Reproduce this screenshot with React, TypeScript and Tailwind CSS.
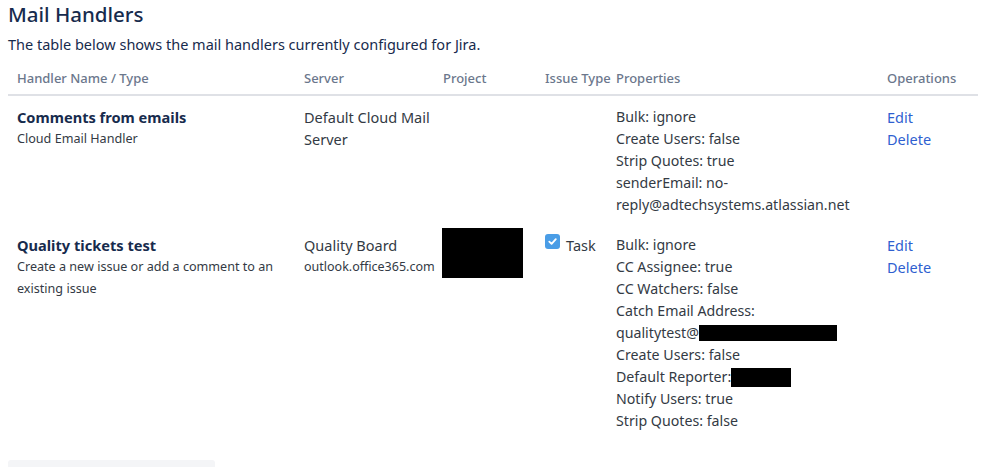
import React from "react";

const font = { fontFamily: '"Noto Sans", "Open Sans", sans-serif' };

function Props({ children }: { children: React.ReactNode }) {
  return <div className="text-[14.2px] leading-[22px] text-[#333a44]">{children}</div>;
}

function Ops() {
  return (
    <div className="flex flex-col text-[14.5px] leading-[22px] text-[#2f5fd0]">
      <a className="cursor-pointer">Edit</a>
      <a className="cursor-pointer">Delete</a>
    </div>
  );
}

const cols = "grid grid-cols-[287px_139px_102px_71px_271px_1fr] pl-[9px]";

export default function App() {
  return (
    <div className="bg-white w-[998px] h-[467px] overflow-hidden px-[8px]" style={font}>
      <h1 className="text-[20.5px] leading-[28px] font-medium text-[#172b4d] m-0">Mail Handlers</h1>
      <p className="mt-[6px] text-[14.5px] leading-[20px] text-[#172b4d]">
        The table below shows the mail handlers currently configured for Jira.
      </p>
      <div className="mt-[14px] w-[970px]">
        <div className={`${cols} pb-[6px] border-b-2 border-[#dfe1e6] text-[13px] leading-[20px] text-[#6b778c] font-medium`}>
          <div>Handler Name / Type</div>
          <div>Server</div>
          <div>Project</div>
          <div>Issue Type</div>
          <div>Properties</div>
          <div>Operations</div>
        </div>

        <div className={`${cols} pt-[10px] pb-[8px]`}>
          <div>
            <div className="text-[14.6px] leading-[22px] font-bold text-[#172b4d]">Comments from emails</div>
            <div className="text-[12.6px] leading-[22px] text-[#333a44]">Cloud Email Handler</div>
          </div>
          <div className="text-[14.5px] leading-[22px] text-[#333a44]">
            Default Cloud Mail
            <br />
            Server
          </div>
          <div />
          <div />
          <Props>
            <div>Bulk: ignore</div>
            <div>Create Users: false</div>
            <div>Strip Quotes: true</div>
            <div>senderEmail: no-</div>
            <div>reply@adtechsystems.atlassian.net</div>
          </Props>
          <Ops />
        </div>

        <div className={`${cols} pt-[10px] pb-[8px]`}>
          <div>
            <div className="text-[14.6px] leading-[22px] font-bold text-[#172b4d]">Quality tickets test</div>
            <div className="text-[12.6px] leading-[22px] text-[#333a44] w-[262px]">
              Create a new issue or add a comment to an existing issue
            </div>
          </div>
          <div>
            <div className="text-[14.5px] leading-[22px] text-[#333a44]">Quality Board</div>
            <div className="text-[12.5px] leading-[22px] text-[#333a44]">outlook.office365.com</div>
          </div>
          <div>
            <div className="-mt-[6px] -ml-[1px] w-[81px] h-[50px] bg-black" />
          </div>
          <div className="flex items-start gap-[6px]">
            <span className="w-[15px] h-[15px] rounded-[3px] bg-[#4a9de6] flex items-center justify-center shrink-0">
              <svg width="11" height="11" viewBox="0 0 12 12">
                <path d="M2.5 6.2 L5 8.6 L9.6 3.4" fill="none" stroke="white" strokeWidth="2" strokeLinecap="round" strokeLinejoin="round" />
              </svg>
            </span>
            <span className="text-[14.5px] leading-[22px] text-[#333a44]">Task</span>
          </div>
          <Props>
            <div>Bulk: ignore</div>
            <div>CC Assignee: true</div>
            <div>CC Watchers: false</div>
            <div>Catch Email Address:</div>
            <div className="flex items-center">
              qualitytest@<span className="inline-block w-[138px] h-[16px] bg-black" />
            </div>
            <div>Create Users: false</div>
            <div className="flex items-center">
              Default Reporter:<span className="inline-block w-[60px] h-[19px] bg-black" />
            </div>
            <div>Notify Users: true</div>
            <div>Strip Quotes: false</div>
          </Props>
          <Ops />
        </div>

        <div className="mt-[20px] w-[207px] h-[20px] rounded-[3px] bg-[#f4f5f7]" />
      </div>
    </div>
  );
}
